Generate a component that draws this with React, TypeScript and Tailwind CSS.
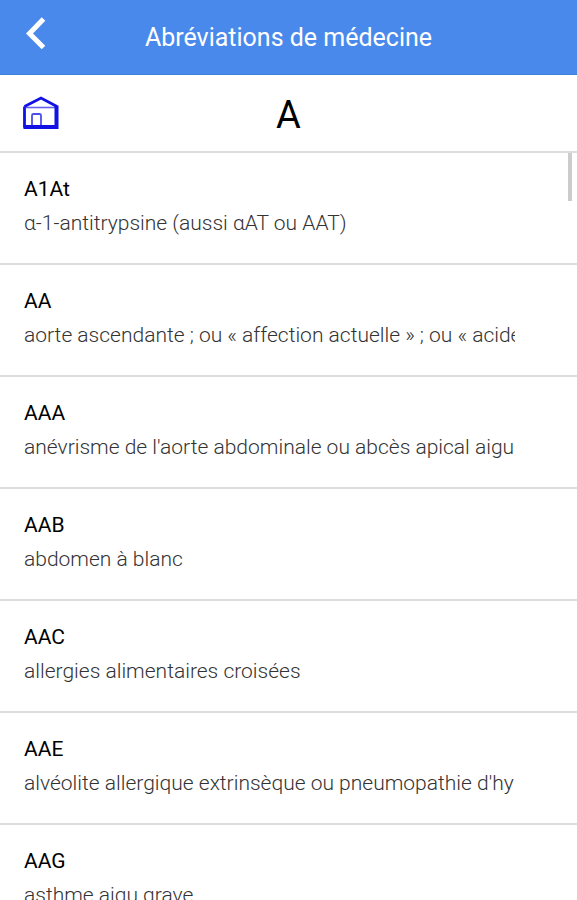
const entries = [
  { abbr: "A1At", meaning: "α-1-antitrypsine (aussi αAT ou AAT)" },
  { abbr: "AA", meaning: "aorte ascendante ; ou « affection actuelle » ; ou « acide" },
  { abbr: "AAA", meaning: "anévrisme de l'aorte abdominale ou abcès apical aigu" },
  { abbr: "AAB", meaning: "abdomen à blanc" },
  { abbr: "AAC", meaning: "allergies alimentaires croisées" },
  { abbr: "AAE", meaning: "alvéolite allergique extrinsèque ou pneumopathie d'hy" },
  { abbr: "AAG", meaning: "asthme aigu grave" },
];

export default function App() {
  return (
    <div className="relative h-screen overflow-hidden bg-white font-['Roboto',sans-serif] text-black">
      <header className="grid h-[75px] grid-cols-[72px_1fr_72px] items-center border-b border-[#3b82d8] bg-[#4a89ec] text-white">
        <button type="button" aria-label="Retour" className="flex h-full items-center pb-2 pl-6">
          <svg width="24" height="36" viewBox="0 0 24 36" fill="none" stroke="currentColor" strokeWidth="5">
            <path d="M19.500 4 5.500 18.500l14 14" />
          </svg>
        </button>
        <h1 className="pt-0.5 text-center text-[25px] leading-8">Abréviations de médecine</h1>
      </header>
      <nav className="grid h-[78px] grid-cols-[72px_1fr_72px] items-center border-b-2 border-[#ddd]">
        <button type="button" aria-label="Accueil" className="flex h-full items-center pl-[22px]">
          <svg width="38" height="36" viewBox="0 0 38 36" fill="none" stroke="#1111e6">
            <path d="M2.500 11.500v21M2.500 11.500 19 3l16 8.500" strokeWidth="2.800" />
            <path d="M34.500 10.500V34M1.500 32h35" strokeWidth="4" />
            <path d="M4 12.500h30" strokeWidth="1.600" opacity=".65" />
            <path d="M10 32V20.500q0-1.500 1.500-1.500h6q1.500 0 1.500 1.500V32" strokeWidth="1.800" opacity=".75" />
          </svg>
        </button>
        <h2 className="pt-1 text-center text-[38px] leading-10">A</h2>
      </nav>
      <ul>
        {entries.map(({ abbr, meaning }) => (
          <li key={abbr} className="h-28 border-b-2 border-[#ddd] pt-5 pr-[62px] pl-6">
            <h3 className="text-[21px] leading-8">{abbr}</h3>
            <p className="overflow-hidden text-[21px] leading-9 font-light whitespace-nowrap text-[#333]">{meaning}</p>
          </li>
        ))}
      </ul>
      <div className="absolute top-[153px] right-[5px] h-12 w-1 bg-[#ccc]" />
    </div>
  );
}
